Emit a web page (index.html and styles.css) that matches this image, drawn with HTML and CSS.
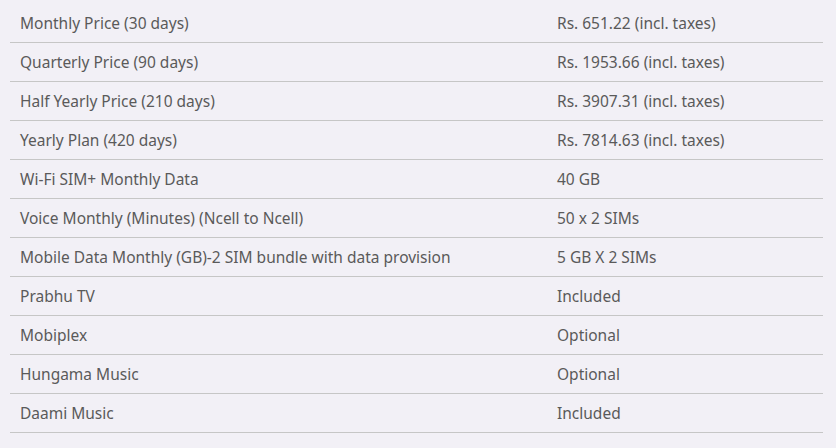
FILE: index.html
```html
<!DOCTYPE html>
<html>
<head>
<meta charset="utf-8">
<link rel="stylesheet" href="styles.css">
</head>
<body>
<table class="plan">
  <tbody>
    <tr><td class="label">Monthly Price (30 days)</td><td class="value">Rs. 651.22 (incl. taxes)</td></tr>
    <tr><td class="label">Quarterly Price (90 days)</td><td class="value">Rs. 1953.66 (incl. taxes)</td></tr>
    <tr><td class="label">Half Yearly Price (210 days)</td><td class="value">Rs. 3907.31 (incl. taxes)</td></tr>
    <tr><td class="label">Yearly Plan (420 days)</td><td class="value">Rs. 7814.63 (incl. taxes)</td></tr>
    <tr><td class="label">Wi-Fi SIM+ Monthly Data</td><td class="value">40 GB</td></tr>
    <tr><td class="label">Voice Monthly (Minutes) (Ncell to Ncell)</td><td class="value">50 x 2 SIMs</td></tr>
    <tr><td class="label">Mobile Data Monthly (GB)-2 SIM bundle with data provision</td><td class="value">5 GB X 2 SIMs</td></tr>
    <tr><td class="label">Prabhu TV</td><td class="value">Included</td></tr>
    <tr><td class="label">Mobiplex</td><td class="value">Optional</td></tr>
    <tr><td class="label">Hungama Music</td><td class="value">Optional</td></tr>
    <tr><td class="label">Daami Music</td><td class="value">Included</td></tr>
  </tbody>
</table>
</body>
</html>
```
FILE: styles.css
```css
html, body {
  margin: 0;
  padding: 0;
  background: #f2f0f6;
}
body {
  padding: 4px 13px 0 10px;
  font-family: "Noto Sans", "Open Sans", sans-serif;
  font-size: 15.5px;
  color: #5a5a5a;
}
.plan {
  width: 813px;
  border-collapse: collapse;
}
.plan td {
  height: 38px;
  padding: 0 10px;
  border-bottom: 1px solid #c6c6c6;
  vertical-align: middle;
  line-height: 20px;
}
.plan td.label {
  width: 517px;
}
```
